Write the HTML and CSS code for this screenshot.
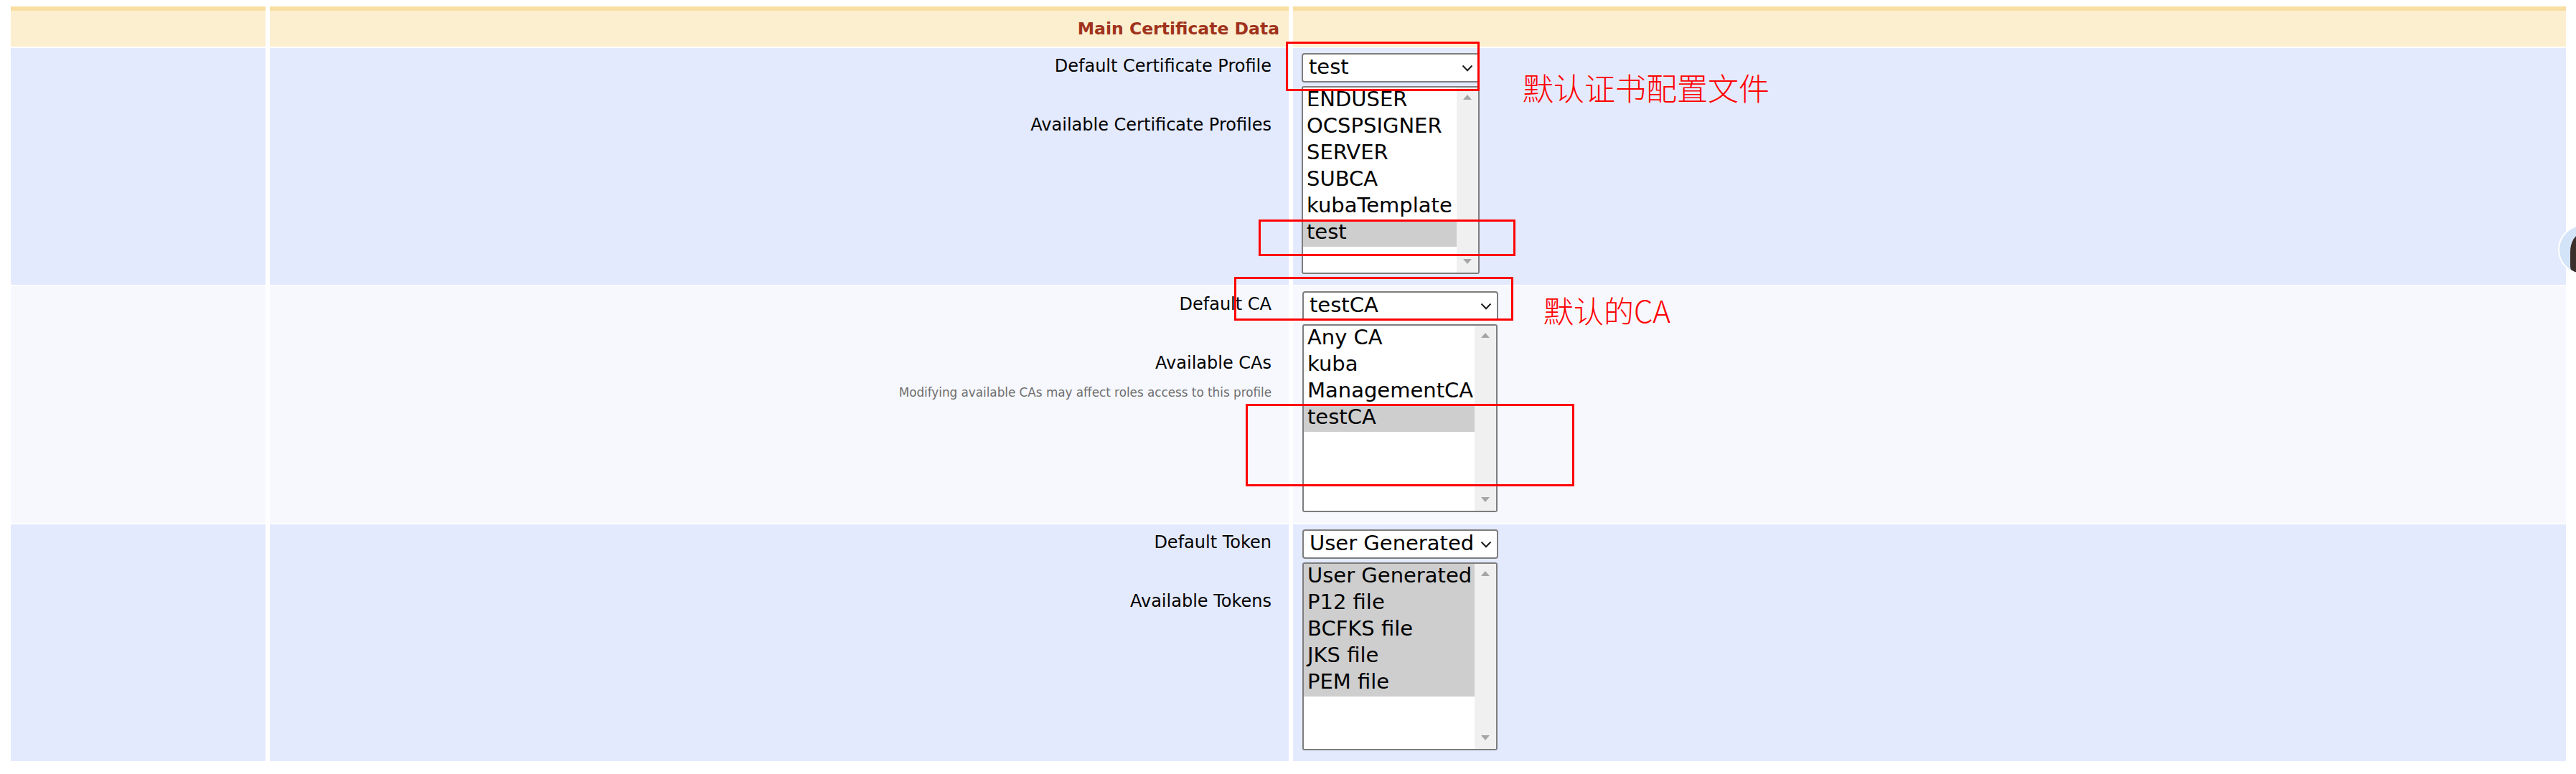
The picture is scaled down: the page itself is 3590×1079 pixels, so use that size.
FILE: index.html
```html
<!DOCTYPE html>
<html lang="en">
<head>
<meta charset="utf-8">
<title>Main Certificate Data</title>
<link rel="stylesheet" href="styles.css">
</head>
<body>
<div class="page">
  <div class="grid">
    <div class="cell head"></div>
    <div class="cell head head-title">Main Certificate Data</div>
    <div class="cell head"></div>

    <div class="cell row-a"></div>
    <div class="cell row-a labels">
      <div class="label">Default Certificate Profile</div>
      <div class="label label-second">Available Certificate Profiles</div>
    </div>
    <div class="cell row-a fields">
      <div class="select sel-narrow"><span class="select-text">test</span><svg class="chev" viewBox="0 0 16 10" width="16" height="10"><polyline points="1.5,1.5 8,8.2 14.5,1.5" fill="none" stroke="#1c1c1c" stroke-width="2"/></svg></div>
      <div class="listbox list-narrow">
        <div class="options">
          <div class="opt">ENDUSER</div>
          <div class="opt">OCSPSIGNER</div>
          <div class="opt">SERVER</div>
          <div class="opt">SUBCA</div>
          <div class="opt">kubaTemplate</div>
          <div class="opt opt-sel">test</div>
        </div>
        <div class="scrollbar"><span class="tri-up"></span><span class="tri-down"></span></div>
      </div>
    </div>

    <div class="cell row-b"></div>
    <div class="cell row-b labels">
      <div class="label">Default CA</div>
      <div class="label label-second">Available CAs</div>
      <div class="note">Modifying available CAs may affect roles access to this profile</div>
    </div>
    <div class="cell row-b fields fields-wide">
      <div class="select sel-wide"><span class="select-text">testCA</span><svg class="chev" viewBox="0 0 16 10" width="16" height="10"><polyline points="1.5,1.5 8,8.2 14.5,1.5" fill="none" stroke="#1c1c1c" stroke-width="2"/></svg></div>
      <div class="listbox list-wide">
        <div class="options">
          <div class="opt">Any CA</div>
          <div class="opt">kuba</div>
          <div class="opt">ManagementCA</div>
          <div class="opt opt-sel">testCA</div>
        </div>
        <div class="scrollbar"><span class="tri-up"></span><span class="tri-down"></span></div>
      </div>
    </div>

    <div class="cell row-a"></div>
    <div class="cell row-a labels">
      <div class="label">Default Token</div>
      <div class="label label-second">Available Tokens</div>
    </div>
    <div class="cell row-a fields fields-wide">
      <div class="select sel-wide"><span class="select-text">User Generated</span><svg class="chev" viewBox="0 0 16 10" width="16" height="10"><polyline points="1.5,1.5 8,8.2 14.5,1.5" fill="none" stroke="#1c1c1c" stroke-width="2"/></svg></div>
      <div class="listbox list-wide">
        <div class="options">
          <div class="opt opt-sel">User Generated</div>
          <div class="opt opt-sel">P12 file</div>
          <div class="opt opt-sel">BCFKS file</div>
          <div class="opt opt-sel">JKS file</div>
          <div class="opt opt-sel">PEM file</div>
        </div>
        <div class="scrollbar"><span class="tri-up"></span><span class="tri-down"></span></div>
      </div>
    </div>
  </div>
</div>

<div class="mark mark-1"></div>
<div class="mark mark-2"></div>
<div class="mark mark-3"></div>
<div class="mark mark-4"></div>
<div class="anno anno-1">默认证书配置文件</div>
<div class="anno anno-2">默认的CA</div>

<div class="avatar"><span class="avatar-figure"></span></div>
</body>
</html>
```

FILE: styles.css
```css
html, body {
  margin: 0;
  padding: 0;
  background: #ffffff;
}

body {
  position: relative;
  width: 3590px;
  height: 1079px;
  overflow: hidden;
  font-family: "DejaVu Sans", Verdana, sans-serif;
  color: #000;
}

.page {
  padding: 9px 14px 0 15px;
}

.grid {
  display: grid;
  grid-template-columns: 355px 1420px 1fr;
  grid-template-rows: 56px 330px 330px 330px;
  column-gap: 6px;
  row-gap: 2px;
}

.head {
  background: #fcefd0;
  border-top: 6px solid #f8dea2;
}

.head-title {
  text-align: right;
  padding-right: 13px;
  font-weight: bold;
  font-size: 23.5px;
  line-height: 50px;
  color: #a0321b;
}

.row-a {
  background: #e4eafd;
}

.row-b {
  background: #f6f8fe;
}

.labels {
  padding: 11px 24px 0 0;
  text-align: right;
}

.label {
  font-size: 24px;
  line-height: 28px;
  white-space: nowrap;
}

.label-second {
  margin-top: 54px;
}

.note {
  margin-top: 17px;
  font-size: 16.8px;
  line-height: 20px;
  color: #6e6e6e;
  white-space: nowrap;
}

.fields {
  padding: 7px 0 0 12px;
  display: flex;
  flex-direction: column;
  align-items: flex-start;
  gap: 5px;
}

.fields-wide {
  padding-left: 13px;
}

.select {
  box-sizing: border-box;
  height: 41px;
  border: 2px solid #7d7d7d;
  border-radius: 4px;
  background: #fff;
  display: flex;
  align-items: flex-start;
  padding-left: 8px;
}

.sel-narrow {
  width: 248px;
}

.sel-wide {
  width: 273px;
}

.select-text {
  font-size: 29px;
  line-height: 33px;
  padding-top: 1px;
  white-space: nowrap;
}

.chev {
  align-self: center;
  margin-left: auto;
  margin-right: 7px;
  flex: none;
}

.listbox {
  box-sizing: border-box;
  height: 262px;
  border: 2px solid #7d7d7d;
  border-radius: 3px;
  background: #fff;
  display: flex;
}

.list-narrow {
  width: 248px;
}

.list-wide {
  width: 272px;
}

.options {
  flex: 1;
  min-width: 0;
}

.opt {
  height: 37px;
  line-height: 33px;
  padding-left: 5px;
  font-size: 29px;
  white-space: nowrap;
  overflow: hidden;
}

.opt-sel {
  background: #cecece;
}

.scrollbar {
  box-sizing: border-box;
  width: 30px;
  flex: none;
  background: #f0f0f0;
  display: flex;
  flex-direction: column;
  justify-content: space-between;
  align-items: center;
  padding: 10px 0 12px;
}

.tri-up {
  width: 0;
  height: 0;
  border-left: 6.5px solid transparent;
  border-right: 6.5px solid transparent;
  border-bottom: 7px solid #a6a6a6;
}

.tri-down {
  width: 0;
  height: 0;
  border-left: 6.5px solid transparent;
  border-right: 6.5px solid transparent;
  border-top: 7px solid #a6a6a6;
}

/* screenshot annotations drawn over the page */
.mark {
  position: absolute;
  box-sizing: border-box;
  border: 3px solid #ff0000;
}

.mark-1 {
  left: 1792px;
  top: 58px;
  width: 270px;
  height: 69px;
}

.mark-2 {
  left: 1754px;
  top: 306px;
  width: 358px;
  height: 51px;
}

.mark-3 {
  left: 1720px;
  top: 386px;
  width: 389px;
  height: 61px;
}

.mark-4 {
  left: 1736px;
  top: 563px;
  width: 458px;
  height: 115px;
}

.anno {
  position: absolute;
  color: #ff0000;
  font-family: "Noto Sans CJK SC", "Noto Sans", sans-serif;
  font-weight: 300;
  line-height: 1;
  white-space: nowrap;
}

.anno-1 {
  left: 2122px;
  top: 100px;
  font-size: 43px;
}

.anno-2 {
  left: 2151px;
  top: 411px;
  font-size: 42px;
}

.avatar {
  position: fixed;
  left: 3565px;
  top: 313px;
  width: 70px;
  height: 70px;
  box-sizing: border-box;
  border-radius: 50%;
  border: 2px solid #ffffff;
  background: #d3e3f8;
  overflow: hidden;
}

.avatar-figure {
  position: absolute;
  left: 15px;
  top: 11px;
  width: 34px;
  height: 56px;
  border-radius: 45% 45% 20% 20%;
  background: #3b302c;
}
```
